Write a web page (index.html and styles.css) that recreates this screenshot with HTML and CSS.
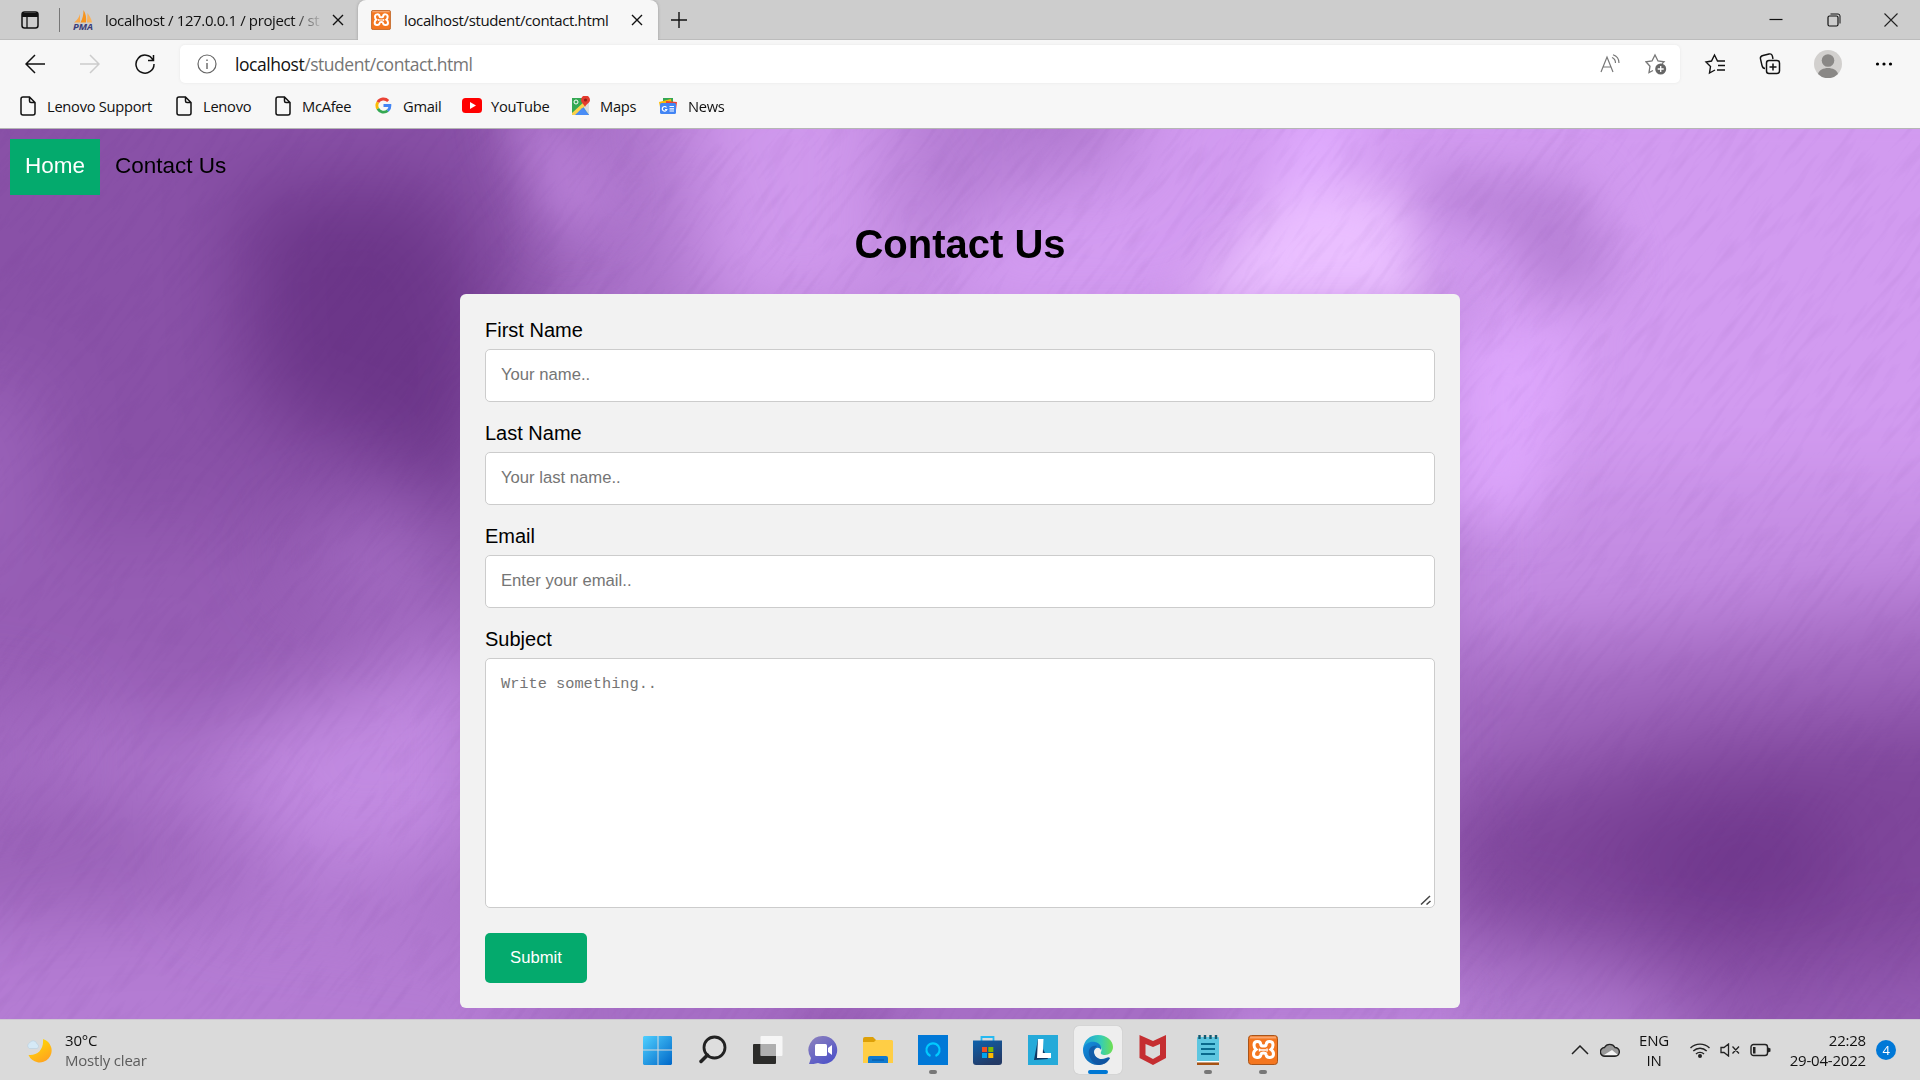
FILE: index.html
```html
<!DOCTYPE html>
<html lang="en">
<head>
<meta charset="utf-8">
<title>localhost/student/contact.html</title>
<link rel="stylesheet" href="styles.css">
</head>
<body>
<svg width="0" height="0" class="defs">
  <defs>
    <symbol id="file" viewBox="0 0 16 20"><path d="M3 1h6.5L15 6.500V17a2 2 0 0 1-2 2H3a2 2 0 0 1-2-2V3a2 2 0 0 1 2-2zM9.500 1v4a1.500 1.500 0 0 0 1.500 1.500h4" fill="none" stroke="#111" stroke-width="1.500"/></symbol>
    <symbol id="xampp" viewBox="0 0 30 30"><rect x=".5" y=".5" width="29" height="29" rx="3" fill="#f4761f" stroke="#a8541a"/><path d="M2 1.500h26v2H2z" fill="#fff" opacity=".35"/><path d="M12.800 9.500C12.500 5.500 6 5.500 6 10c0 2 .8 3.500 2 4.500C6.500 15.500 5.500 17 5.500 19c0 4.500 7 4.500 7.500.500.200-2 4.800-2 5 0 .500 4 7.500 4 7.500-.500 0-2-1-3.500-2.500-4.500 1.200-1 2-2.500 2-4.500 0-4.500-6.500-4.500-6.800-.500-.2 2-5.200 2-5.400 0z" fill="none" stroke="#fff" stroke-width="3"/><path d="M11.500 13.500v3M19 13.500v3M12 15h6" stroke="#fff" stroke-width="1.500"/></symbol>
    <symbol id="close" viewBox="0 0 12 12"><path d="M1 1l10 10M11 1L1 11" stroke="#111" stroke-width="1.400"/></symbol>
  </defs>
</svg>

<header class="browser">
  <div class="tabs">
    <div class="tab-menu"><svg width="20" height="20" viewBox="0 0 20 20"><rect x="2" y="2" width="16" height="16" rx="2.500" fill="none" stroke="#111" stroke-width="1.500"/><path d="M2 3h16v4H2z" fill="#111"/><path d="M7 7v11" stroke="#111" stroke-width="1.300"/></svg></div>
    <div class="tab">
      <svg width="20" height="20" viewBox="0 0 20 20"><path d="M7 4v8.500H1C3.500 10.500 6 8 7 4z" fill="#f9a94a"/><path d="M10.500 0c2.500 4 3 8 2.500 12.500H7.500C9.500 9 10.500 5 10.500 0z" fill="#f7941d"/><path d="M14.500 3c2 3 4 6 4.500 9.500h-5z" fill="#f9b25c"/><text x="0" y="19.500" class="pma" textLength="20" lengthAdjust="spacingAndGlyphs">PMA</text></svg>
      <span class="tab-title fade">localhost / 127.0.0.1 / project / st</span>
      <svg width="12" height="12"><use href="#close"/></svg>
    </div>
    <div class="tab active">
      <svg width="20" height="20"><use href="#xampp"/></svg>
      <span class="tab-title">localhost/student/contact.html</span>
      <svg width="12" height="12"><use href="#close"/></svg>
    </div>
    <svg class="new-tab" width="18" height="18" viewBox="0 0 18 18"><path d="M9 1v16M1 9h16" stroke="#111" stroke-width="1.400"/></svg>
    <div class="window-buttons">
      <svg width="14" height="14" viewBox="0 0 14 14"><path d="M.5 6.500h13" stroke="#111" stroke-width="1.200"/></svg>
      <svg width="14" height="14" viewBox="0 0 14 14"><rect x="1" y="3" width="10" height="10" rx="1.500" fill="none" stroke="#111" stroke-width="1.200"/><path d="M3.500 1h7.500a2 2 0 0 1 2 2v7.500" fill="none" stroke="#111"/></svg>
      <svg width="14" height="14" viewBox="0 0 14 14"><path d="M.5.500l13 13M13.500.500l-13 13" stroke="#222" stroke-width="1.100"/></svg>
    </div>
  </div>

  <div class="toolbar">
    <div class="nav-buttons">
      <svg width="20" height="20" viewBox="0 0 20 20"><path d="M20 10H1M10 1l-9 9 9 9" fill="none" stroke="#111" stroke-width="1.500"/></svg>
      <svg width="20" height="20" viewBox="0 0 20 20"><path d="M0 10h19M10 1l9 9-9 9" fill="none" stroke="#ccc" stroke-width="1.500"/></svg>
      <svg width="20" height="20" viewBox="0 0 20 20"><path d="M18.500 1v5.500H13M18 6A9 9 0 1 0 19 10" fill="none" stroke="#111" stroke-width="1.500"/></svg>
    </div>
    <div class="address">
      <svg width="20" height="20" viewBox="0 0 20 20"><circle cx="10" cy="10" r="9" fill="none" stroke="#666" stroke-width="1.200"/><path d="M10 9v6M10 5.500v1.500" stroke="#666" stroke-width="1.400"/></svg>
      <span class="url">localhost<span class="path">/student/contact.html</span></span>
      <svg width="20" height="20" viewBox="0 0 20 20"><path d="M1 18L7 3l6 15M3 13h8" fill="none" stroke="#777" stroke-width="1.200"/><path d="M12 3.500q3.500 1.500 3.500 5.500M13 .8q6 2 6 8.200" fill="none" stroke="#777" stroke-width="1.200"/></svg>
      <svg class="favorite" width="22" height="22" viewBox="0 0 22 22"><path d="M8 17.500l-4 2 1-6.300L1 8.800l6-.8 3-6 3 6 6 .8-2 2" fill="none" stroke="#777" stroke-width="1.300"/><circle cx="15.700" cy="16" r="5.500" fill="#666"/><path d="M15.700 13v6M12.700 16h6" stroke="#fff" stroke-width="1.300"/></svg>
    </div>
    <div class="tools">
      <svg width="22" height="22" viewBox="0 0 22 22"><path d="M11 17l-5.500 3 1-6.500L2 9l5.500-1L10.500 2l3 6H21M14 12.500h7M13 17h8" fill="none" stroke="#111" stroke-width="1.400"/></svg>
      <svg width="22" height="22" viewBox="0 0 22 22"><path d="M6 15.500c-2 0-2.500-1-3-3L1.500 6C1 4 2 3 4 2.500L10 1c2-.5 3 .5 3.500 2.500L14 6" fill="none" stroke="#111" stroke-width="1.400"/><rect x="7.500" y="7.500" width="13" height="13" rx="2.500" fill="none" stroke="#111" stroke-width="1.500"/><path d="M14 10.500v7M10.500 14h7" stroke="#111" stroke-width="1.500"/></svg>
      <svg width="28" height="28" viewBox="0 0 28 28"><circle cx="14" cy="14" r="14" fill="#d2d0ce"/><circle cx="14" cy="10.500" r="6.300" fill="#8a8886"/><path d="M4 24c2-8 18-8 20 0a14 14 0 0 1-20 0z" fill="#8a8886"/></svg>
      <svg width="18" height="18" viewBox="0 0 18 18"><circle cx="2.500" cy="9" r="1.600"/><circle cx="9" cy="9" r="1.600"/><circle cx="15.500" cy="9" r="1.600"/></svg>
    </div>
  </div>

  <nav class="bookmarks">
    <a class="w1"><svg width="16" height="20"><use href="#file"/></svg><span>Lenovo Support</span></a>
    <a class="w2"><svg width="16" height="20"><use href="#file"/></svg><span>Lenovo</span></a>
    <a class="w2"><svg width="16" height="20"><use href="#file"/></svg><span>McAfee</span></a>
    <a class="w3"><svg width="17" height="17" viewBox="0 0 18 18"><g fill="none" stroke-width="3"><path d="M14 4.200A7 7 0 0 0 3 5.500" stroke="#ea4335"/><path d="M3 5.500a7 7 0 0 0 0 7" stroke="#fbbc05"/><path d="M3 12.500a7 7 0 0 0 10.500 2" stroke="#34a853"/><path d="M13.500 14.500A7 7 0 0 0 15.800 9H9" stroke="#4285f4"/></g></svg><span>Gmail</span></a>
    <a class="w4"><svg width="20" height="15" viewBox="0 0 20 15"><rect width="20" height="15" rx="3.500" fill="#f00"/><path d="M8 4l6 3.500L8 11z" fill="#fff"/></svg><span>YouTube</span></a>
    <a class="w5"><svg width="20" height="20" viewBox="0 0 20 20"><path d="M1 2h17v17H1z" fill="#34a853"/><path d="M1 19L11 9l7 10z" fill="#4285f4"/><path d="M11 9l7-5v15z" fill="#dadce0"/><path d="M1 17L14 5l2 3L4 19H1z" fill="#fbd14b"/><path d="M5 19l6-7 7 7z" fill="#4a8df6"/><path d="M14 11c-1-3-4-4-4-7a4.500 4.500 0 0 1 9 0c0 3-4 4-5 7z" fill="#e33b2e"/><circle cx="14.500" cy="4" r="1.600" fill="#8e1f18"/><circle cx="5" cy="6" r="2" fill="none" stroke="#fff"/></svg><span>Maps</span></a>
    <a><svg width="18" height="18" viewBox="0 0 18 18"><path d="M4 1h10v8H4z" fill="#34a853"/><path d="M0 5l12-3 1 8H1z" fill="#fbbc05"/><path d="M7 4l11 1-1 8H7z" fill="#ea4335"/><rect x="1" y="6" width="16" height="11" rx="1.500" fill="#4285f4"/><path d="M7.500 10.500a2.300 2.300 0 1 0 .3 2H6M10.500 9.500h4.500M10.500 11.800h4.500M10.500 14h4.500" fill="none" stroke="#fff" stroke-width="1.200"/></svg><span>News</span></a>
  </nav>
</header>

<main class="page">
  <svg class="backdrop" viewBox="0 128 1920 892" preserveAspectRatio="none">
    <defs>
      <filter id="soft" filterUnits="userSpaceOnUse" x="-200" y="-100" width="2320" height="1350" color-interpolation-filters="sRGB">
        <feGaussianBlur stdDeviation="42"/>
      </filter>
      <filter id="softer" filterUnits="userSpaceOnUse" x="-200" y="-100" width="2320" height="1350" color-interpolation-filters="sRGB">
        <feGaussianBlur stdDeviation="24"/>
      </filter>
      <filter id="strokes" filterUnits="userSpaceOnUse" x="-1200" y="-1200" width="3800" height="3600" color-interpolation-filters="sRGB">
        <feTurbulence type="fractalNoise" baseFrequency="0.02 0.16" numOctaves="2" seed="4"/>
        <feColorMatrix values="0 0 0 0 .42  0 0 0 0 .2  0 0 0 0 .56  1.600 0 0 0 -.78"/>
      </filter>
    </defs>
    <rect y="128" width="1920" height="892" fill="#a66ec5"/>
    <g filter="url(#soft)">
      <path d="M-150 0H520L560 300 480 480 250 560-150 560z" fill="#8951a7"/>
      <path d="M240 190L440 180 500 340 480 660 430 480 250 400z" fill="#6c3689"/>
      <path d="M-150 380H40L60 620H-150z" fill="#9a62b9"/>
      <path d="M-150 570L200 520 460 640 200 740-150 700z" fill="#965db4"/>
      <path d="M200 740L480 640V860L300 880z" fill="#c28be1"/>
      <path d="M60 700L220 740 230 860 60 800z" fill="#ad75cc"/>
      <path d="M-150 800L120 790 240 900 120 950-150 900z" fill="#9961b7"/>
      <path d="M-150 930L300 900 520 930 540 1150H-150z" fill="#b47cd3"/>
      <path d="M540 40H700L660 330 580 330z" fill="#ac74cb"/>
      <path d="M680 40H900L900 330H700z" fill="#cf98ec"/>
      <path d="M890 40H1080L1060 190 930 230z" fill="#b47cd3"/>
      <path d="M930 240L1150 140 1250 340H900z" fill="#d49df2"/>
      <path d="M1100 40L2100 40V560L1440 660V290H1180z" fill="#d29bf0"/>
      <path d="M1440 480L2100 480V680H1440z" fill="#c48ce3"/>
      <path d="M1400 660L2100 580V730L1400 820z" fill="#a067be"/>
      <path d="M1430 800L1700 730 2100 700V950L1720 990 1430 920z" fill="#7f469b"/>
      <path d="M1580 840L1820 800 1840 900 1700 920z" fill="#6e368b"/>
      <path d="M1400 960L1620 960 1700 1120H1400z" fill="#b079cf"/>
      <path d="M1700 990L2100 970V1100H1680z" fill="#955cb4"/>
    </g>
    <g filter="url(#softer)">
      <path d="M1290 180L1400 190 1430 310H1180z" fill="#eabfff"/>
      <path d="M1430 170L1580 180 1620 280 1540 300 1500 230 1410 210z" fill="#b881d7"/>
      <path d="M1300 110H1380L1310 200 1270 180z" fill="#e1adff"/>
      <path d="M1450 330L1580 330 1540 520H1440z" fill="#e0aaff" opacity=".75"/>
      <path d="M500 110H550L620 200 560 240z" fill="#c088de" opacity=".7"/>
      <path d="M800 1005L880 990 890 1060H760z" fill="#965cb3"/>
      <path d="M1220 1000H1460V1060H1220z" fill="#bd86dc"/>
    </g>
    <g transform="rotate(-52 960 570)"><rect x="-500" y="-600" width="2900" height="2400" filter="url(#strokes)" opacity=".1"/></g>
  </svg>
  <nav class="site-nav">
    <a class="current">Home</a>
    <a>Contact Us</a>
  </nav>
  <h1>Contact Us</h1>
  <form class="card">
    <label for="fname">First Name</label>
    <input id="fname" type="text" placeholder="Your name..">
    <label for="lname">Last Name</label>
    <input id="lname" type="text" placeholder="Your last name..">
    <label for="email">Email</label>
    <input id="email" type="text" placeholder="Enter your email..">
    <label for="subject">Subject</label>
    <textarea id="subject" placeholder="Write something.."></textarea>
    <svg class="grip" width="12" height="10" viewBox="0 0 12 10"><path d="M1 9.500L10 1M6.500 9.500L10.500 6" stroke="#444" stroke-width="1.500"/></svg>
    <button type="button">Submit</button>
  </form>
</main>

<footer class="taskbar">
  <div class="weather">
    <svg width="28" height="28" viewBox="0 0 28 28"><defs><linearGradient id="moon" x1="0" x2=".6" y1="0" y2="1"><stop offset="0" stop-color="#ffe600"/><stop offset="1" stop-color="#ffa51e"/></linearGradient></defs><path d="M17 3a12 12 0 1 1-14.500 16C11 20 18 14 17 3z" fill="url(#moon)"/><path d="M3.500 12.500a3 3 0 0 1 0-5.500 4 4 0 0 1 7.500 1 2.400 2.400 0 0 1 0 4.500z" fill="#d5e9f6" stroke="#b7cfdf" stroke-width=".6"/></svg>
    <div><div>30°C</div><div class="muted">Mostly clear</div></div>
  </div>

  <div class="apps">
    <span><svg width="30" height="30" viewBox="0 0 30 30"><defs><linearGradient id="win" x1="0" y1="0" x2="1" y2="1"><stop offset="0" stop-color="#4fd0ff"/><stop offset="1" stop-color="#0067c8"/></linearGradient></defs><path d="M1 1h13.500v13.500H0V2zM15.500 1H28l1 1v12.500H15.500zM0 15.500h14.500V30H1l-1-1zM15.500 15.500H29V29l-1 1H15.500z" fill="url(#win)"/></svg></span>
    <span><svg width="30" height="30" viewBox="0 0 30 30"><circle cx="16.500" cy="12.500" r="10.500" fill="#dedede" stroke="#222" stroke-width="2.800"/><path d="M9.500 20L3 26.500" stroke="#222" stroke-width="3.500" stroke-linecap="round"/></svg></span>
    <span><svg width="30" height="30" viewBox="0 0 30 30"><rect x="0" y="9" width="23" height="20" rx="1" fill="#2c2c2a"/><rect x="7.500" y="1" width="22" height="20" rx="1" fill="#fff" opacity=".75"/><path d="M7.500 9H23v12H7.500z" fill="#999" opacity=".55"/></svg></span>
    <span><svg width="30" height="30" viewBox="0 0 30 30"><defs><linearGradient id="chat" x1="0" x2=".7" y1="0" y2="1"><stop offset="0" stop-color="#8f83bd"/><stop offset="1" stop-color="#4f53c8"/></linearGradient></defs><path d="M15 1a14 14 0 1 1-5 27c-3 1-6 1-9 1l2-6A14 14 0 0 1 15 1z" fill="url(#chat)"/><rect x="7" y="9" width="12" height="12" rx="1.500" fill="#fff"/><path d="M20 13l4-3v10l-4-3z" fill="#fff"/></svg></span>
    <span><svg width="30" height="30" viewBox="0 0 30 30"><path d="M0 4q0-2 2-2h8l3 3v5H0z" fill="#dda008"/><path d="M0 7h11l2-2h16l1 1v22H0z" fill="#ffce45"/><path d="M5 28v-5q0-2 2-2h16q2 0 2 2v5z" fill="#0f7ad1"/><path d="M9 25h12" stroke="#07539b"/></svg></span>
    <span class="open"><svg width="30" height="30" viewBox="0 0 30 30"><path d="M0 0h30v30H0z" fill="#0078d7"/><path d="M12.500 21a6.600 6.600 0 1 1 5 0" fill="none" stroke="#00caff" stroke-width="2.200"/></svg></span>
    <span><svg width="30" height="30" viewBox="0 0 30 30"><defs><linearGradient id="bag" x1="0" x2=".5" y1="0" y2="1"><stop offset="0" stop-color="#0e62ad"/><stop offset="1" stop-color="#233a66"/></linearGradient></defs><path d="M8.500 6V2h12v4" fill="none" stroke="#26b9f1" stroke-width="1.800"/><path d="M0 5.500h29V27q0 3-3 3H3q-3 0-3-3z" fill="url(#bag)"/><path d="M9 12h5v5H9z" fill="#f25022"/><path d="M15.300 12h5v5h-5z" fill="#7fba00"/><path d="M9 18h5v5H9z" fill="#00a4ef"/><path d="M15.300 18h5v5h-5z" fill="#ffb900"/></svg></span>
    <span><svg width="30" height="30" viewBox="0 0 30 30"><path d="M0 0h30v30H0z" fill="#25aad9"/><path d="M10 4L6 25l14-1z" fill="#0b3763"/><path d="M10 4h5.500l-.7 14H23v5H9z" fill="#fff"/></svg></span>
    <span class="focused"><svg width="30" height="30" viewBox="0 0 30 30"><defs><linearGradient id="e1" x1="0" x2="1"><stop offset="0" stop-color="#1e9fdd"/><stop offset=".6" stop-color="#36cdb4"/><stop offset="1" stop-color="#70e04f"/></linearGradient><linearGradient id="e2" x1="0" x2="1" y2="1"><stop offset="0" stop-color="#1490df"/><stop offset="1" stop-color="#0b539f"/></linearGradient></defs><path d="M0 14C1 5 7 0 15 0c9 0 15 6 15 12 0 5-4 8-8 8-3 0-5-1-4-3 2-4-1-8-6-8-6 0-11 3-12 8z" fill="url(#e1)"/><path d="M0 15c1-7 8-9 12-8 5 1 7 5 6 8-2-4-7-2-7 2 0 5 6 9 12 6 2-1 3-1 4 0-3 5-7 7-12 7C6 30 0 23 0 15z" fill="url(#e2)"/><path d="M6 19c-1-6 3-9 8-8-5 3-4 10 2 13 4 2 8 0 11-1-2 4-6 7-11 7C11 29 7 25 6 19z" fill="#11509c" opacity=".7"/></svg></span>
    <span><svg width="30" height="30" viewBox="0 0 30 30"><path d="M1.500 0L15 6l13-6v23l-13 7-13.500-7zM7.500 9v11l7.500 4 7-4V9l-7 3z" fill="#c52e31" fill-rule="evenodd"/></svg></span>
    <span class="open"><svg width="30" height="30" viewBox="0 0 30 30"><rect x="4" y="2" width="22" height="25" rx="1" fill="#5dc6e0"/><path d="M8 9h14M8 14h14M8 19h14" stroke="#096a8d" stroke-width="2"/><path d="M6.500 0v4M12 0v4M17.500 0v4M23 0v4" stroke="#155a70" stroke-width="2.400"/><path d="M4 26h22v1.500H4z" fill="#fff"/><path d="M4 27.500h22V30H4z" fill="#a65213"/></svg></span>
    <span class="open"><svg width="30" height="30"><use href="#xampp"/></svg></span>
  </div>

  <div class="tray">
    <svg width="18" height="10" viewBox="0 0 18 10"><path d="M1 9l8-8 8 8" fill="none" stroke="#222" stroke-width="1.500"/></svg>
    <svg class="cloud" width="20" height="14" viewBox="0 0 20 14"><path d="M5 13a4 4 0 0 1-.5-8.500 6 6 0 0 1 10.500 0A4.200 4.200 0 0 1 15 13z" fill="#999"/><path d="M4 12l8-5 6 5z" fill="#f5f5f5"/><path d="M5 13.200a4.200 4.200 0 0 1-.5-8.700 6 6 0 0 1 10.500 0 4.300 4.300 0 0 1 0 8.700z" fill="none" stroke="#222" stroke-width="1.400"/></svg>
    <div class="lang"><div>ENG</div><div>IN</div></div>
    <svg class="wifi" width="20" height="16" viewBox="0 0 20 16"><g fill="none" stroke="#222" stroke-width="1.400"><path d="M.5 6a13.500 13.500 0 0 1 19 0M3.300 9a9.500 9.500 0 0 1 13.400 0M6 12a5.700 5.700 0 0 1 8 0"/></g><circle cx="10" cy="14" r="2" fill="#222"/></svg>
    <svg class="sound" width="20" height="14" viewBox="0 0 20 14"><path d="M1 4.500h3L8.500 1v12L4 9.500H1zM12.500 3.500l6.500 7M19 3.500l-6.500 7" fill="none" stroke="#222" stroke-width="1.300"/></svg>
    <svg class="battery" width="21" height="14" viewBox="0 0 21 14"><rect x="1" y="1.500" width="16.500" height="11" rx="2.500" fill="none" stroke="#222" stroke-width="1.400"/><path d="M3 4h2.500v6.500H3z" fill="#222"/><path d="M18 4.500l2.500 1v3l-2.500 1z" fill="#222"/></svg>
    <div class="clock"><div>22:28</div><div>29-04-2022</div></div>
    <span class="badge">4</span>
  </div>
</footer>
</body>
</html>
```
FILE: styles.css
```css
* { box-sizing: border-box; }
body {
  margin: 0;
  width: 1920px;
  height: 1080px;
  overflow: hidden;
  display: flex;
  flex-direction: column;
  font-family: "Open Sans", "Noto Sans", sans-serif;
  font-size: 15px;
  color: #111;
}
svg { display: block; flex: none; }
.defs { position: absolute; }

/* Browser chrome */
.browser { height: 129px; background: #f7f7f7; border-bottom: 1px solid #b5b5b5; flex: none; }
.tabs { height: 40px; background: #cdcdcd; display: flex; align-items: center; box-shadow: inset 0 -1px #bcbcbc; }
.tab-menu { width: 60px; height: 24px; padding-left: 20px; border-right: 1px solid #777; display: flex; align-items: center; }
.tab { width: 298px; height: 40px; display: flex; align-items: center; padding: 0 14px 0 13px; }
.tab.active { width: 300px; background: #f7f7f7; border-radius: 8px 8px 0 0; padding-right: 15px; box-shadow: 0 0 3px #999; clip-path: inset(0 -4px 0 -4px); }
.tab-title { flex: 1; margin-left: 12px; padding-bottom: 1px; font-size: 15px; letter-spacing: -.37px; white-space: nowrap; overflow: hidden; }
.active .tab-title { margin-left: 13px; }
.fade { margin-right: 4px; -webkit-mask-image: linear-gradient(90deg, #000 84%, transparent 98%); mask-image: linear-gradient(90deg, #000 84%, transparent 98%); }
.pma { font: italic bold 8.500px "Open Sans", sans-serif; fill: #3a3c78; }
.new-tab { margin-left: 12px; }
.window-buttons { margin-left: auto; display: flex; gap: 43.500px; padding-right: 22px; }

.toolbar { height: 48px; display: flex; align-items: center; }
.nav-buttons { width: 180px; padding-left: 25px; display: flex; gap: 35px; }
.address { width: 1500px; height: 38px; background: #fff; border-radius: 5px; display: flex; align-items: center; padding: 0 13px 0 17px; box-shadow: 0 0 3px #e6e6e6; }
.url { flex: 1; margin-left: 18px; padding-bottom: 1px; font-size: 17.500px; letter-spacing: -.46px; line-height: 24px; }
.path { color: #757575; }
.favorite { margin-left: 25px; }
.tools { display: flex; align-items: center; padding-left: 24px; gap: 33px; }

.bookmarks { height: 38px; display: flex; align-items: center; padding: 0 0 3px 20px; font-size: 14.700px; letter-spacing: -.28px; white-space: nowrap; }
.bookmarks a { display: flex; align-items: center; gap: 11px; }
.bookmarks .w1 { width: 156px; }
.bookmarks .w2 { width: 99px; }
.bookmarks .w3 { width: 88px; padding-left: 1px; }
.bookmarks .w4 { width: 109px; gap: 9px; }
.bookmarks .w5 { width: 88px; gap: 9px; }

/* Contact page */
.page { height: 890px; flex: none; position: relative; overflow: hidden; padding: 10px; font-family: "Liberation Sans", Arial, sans-serif; color: #000; }
.backdrop { position: absolute; inset: 0; width: 1920px; height: 890px; z-index: -1; }
.site-nav { display: flex; font-size: 22.500px; line-height: 26px; }
.site-nav a { height: 56px; padding: 14px 15px 0; }
.site-nav .current { width: 90px; background: #04aa6d; color: #fff; }
h1 { margin: 26px 0 27px; font-size: 40px; line-height: 46px; text-align: center; }
.card { position: relative; width: 1000px; height: 714px; margin: 0 auto; padding: 25px; background: #f2f2f2; border-radius: 6px; display: flex; flex-direction: column; align-items: flex-start; }
.card label { font-size: 20px; line-height: 22px; }
.card input, .card textarea {
  width: 950px;
  height: 53px;
  margin: 8px 0 20px;
  padding: 13px 15px 15px;
  border: 1px solid #ccc;
  border-radius: 5px;
  background: #fff;
  font: 16.670px "Liberation Sans", Arial, sans-serif;
  flex: none;
}
.card textarea { height: 250px; margin-bottom: 25px; padding-top: 16px; font: 15.300px "Liberation Mono", monospace; resize: none; }
.grip { position: absolute; right: 28px; bottom: 103px; }
::placeholder { color: #757575; }
.card button { width: 102px; height: 50px; padding: 0 0 1px; border: 0; border-radius: 5px; background: #04aa6d; color: #fff; font: 16.670px "Liberation Sans", Arial, sans-serif; }

/* Taskbar */
.taskbar { height: 61px; background: #dadada; border-top: 1px solid #cfc8d2; display: grid; grid-template-columns: 634px 653px 1fr; line-height: 20px; padding-bottom: 1px; }
.weather { display: flex; align-items: center; gap: 11px; padding-left: 26px; letter-spacing: -.2px; }
.muted { color: #5c5c5c; }
.apps { display: flex; gap: 7px; align-items: center; }
.apps span { width: 48px; height: 48px; border-radius: 5px; display: grid; place-items: center; position: relative; }
.apps .focused { background: #eee; box-shadow: 0 0 1px #aaa; }
.open::after, .focused::after { content: ""; position: absolute; bottom: 0; left: 20px; width: 8px; height: 4px; border-radius: 2px; background: #777; }
.focused::after { left: 14px; width: 20px; background: #0078d4; }
.tray { display: flex; align-items: center; justify-content: flex-end; padding-right: 24px; font-size: 15px; letter-spacing: -.2px; }
.cloud { margin: 0 18px 0 11px; }
.lang { width: 32px; text-align: center; }
.wifi { margin-left: 20px; }
.sound { margin-left: 10px; }
.battery { margin-left: 10px; }
.clock { width: 95px; text-align: right; }
.badge { width: 20px; height: 20px; margin-left: 10px; border-radius: 50%; background: #0078d7; color: #fff; text-align: center; font-size: 13px; }
```
